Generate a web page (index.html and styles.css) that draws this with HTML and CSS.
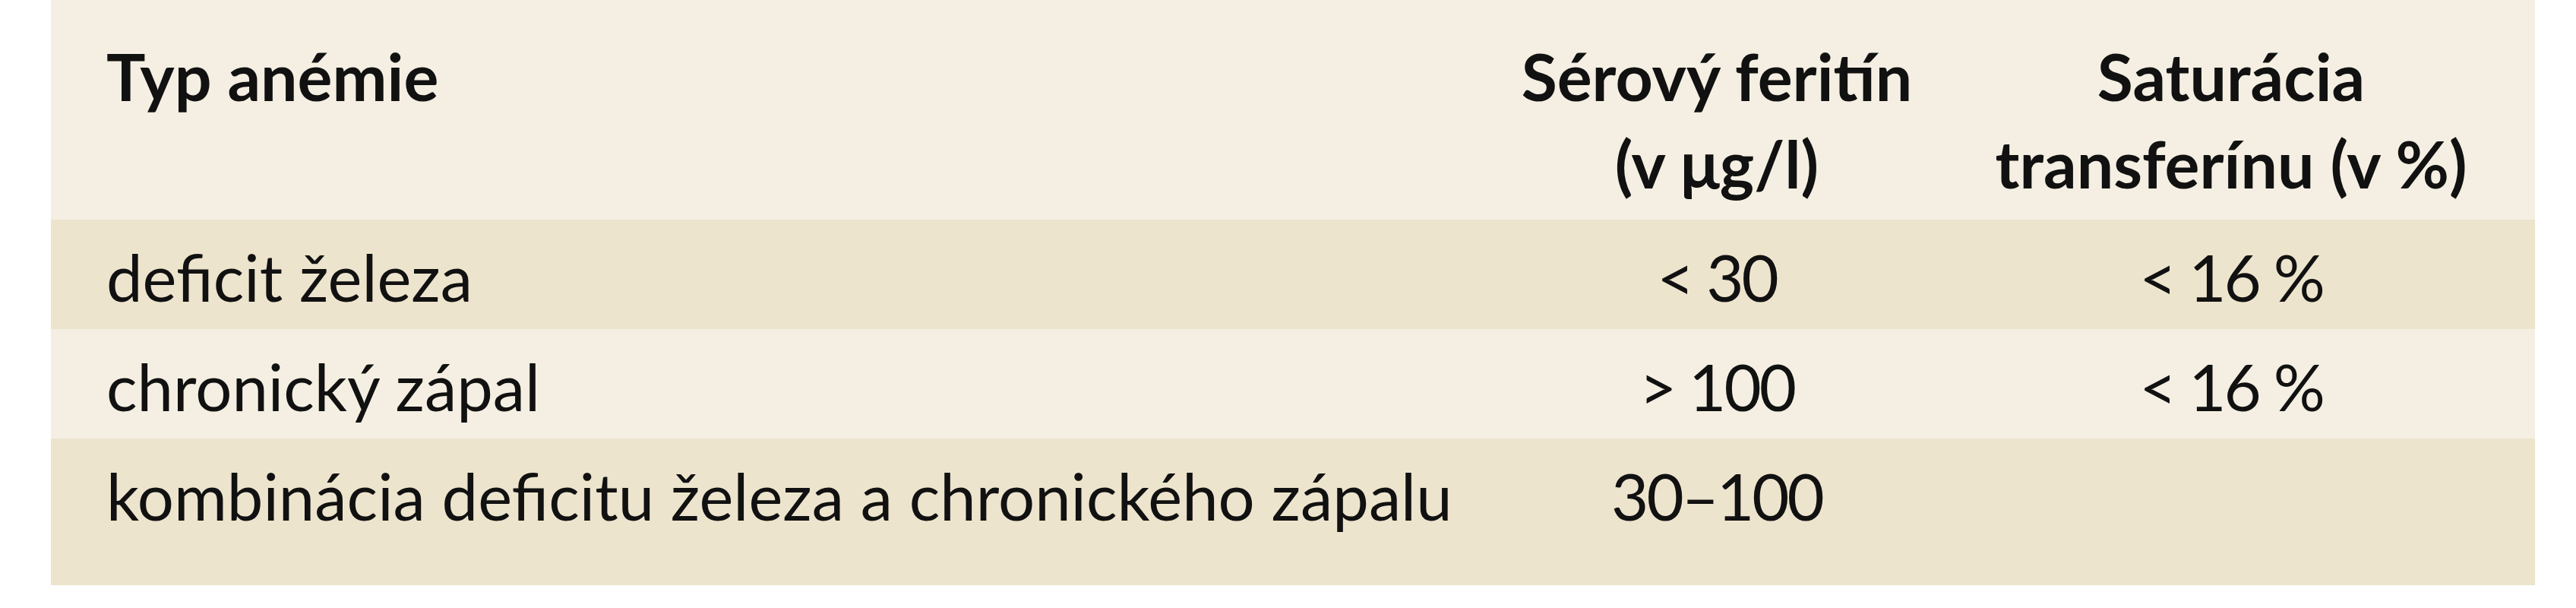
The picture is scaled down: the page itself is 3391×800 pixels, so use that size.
FILE: index.html
```html
<!DOCTYPE html>
<html lang="sk">
<head>
<meta charset="utf-8">
<title>Typ anémie</title>
<link rel="stylesheet" href="styles.css">
</head>
<body>
<table class="anemia">
  <colgroup>
    <col class="c-type">
    <col class="c-ferritin">
    <col class="c-sat">
  </colgroup>
  <thead>
    <tr class="row-head">
      <th class="cell cell-left">Typ anémie</th>
      <th class="cell cell-center">Sérový feritín<br>(v μg/l)</th>
      <th class="cell cell-center">Saturácia<br>transferínu (v %)</th>
    </tr>
  </thead>
  <tbody>
    <tr class="row-dark">
      <td class="cell cell-left">deficit železa</td>
      <td class="cell cell-center num">&lt; 30</td>
      <td class="cell cell-center num">&lt; 16 %</td>
    </tr>
    <tr class="row-light">
      <td class="cell cell-left">chronický zápal</td>
      <td class="cell cell-center num">&gt; 100</td>
      <td class="cell cell-center num">&lt; 16 %</td>
    </tr>
    <tr class="row-dark row-last">
      <td class="cell cell-left">kombinácia deficitu železa a chronického zápalu</td>
      <td class="cell cell-center num">30–100</td>
      <td class="cell cell-center num"></td>
    </tr>
  </tbody>
</table>
</body>
</html>
```

FILE: styles.css
```css
html, body {
  margin: 0;
  padding: 0;
  background: #ffffff;
}

body {
  font-family: Lato, "Noto Sans", "Liberation Sans", sans-serif;
  color: #111111;
}

.anemia {
  margin-left: 67px;
  width: 3270px;
  border-collapse: collapse;
  table-layout: fixed;
  font-size: 85px;
  line-height: 115px;
}

.c-type { width: 1916px; }
.c-ferritin { width: 554px; }
.c-sat { width: 800px; }

.cell {
  padding: 18px 0 11px 0;
  vertical-align: top;
  white-space: nowrap;
  font-weight: 400;
}

.cell-left {
  text-align: left;
  padding-left: 73px;
}

.cell-center {
  text-align: center;
}

.num {
  letter-spacing: -3px;
}

th.cell {
  font-weight: 700;
  font-size: 86px;
  padding-top: 42px;
  padding-bottom: 17px;
}

.row-head,
.row-light {
  background: #f4efe2;
}

.row-dark {
  background: #ede4cd;
}

.row-last .cell {
  padding-bottom: 60px;
}
```
